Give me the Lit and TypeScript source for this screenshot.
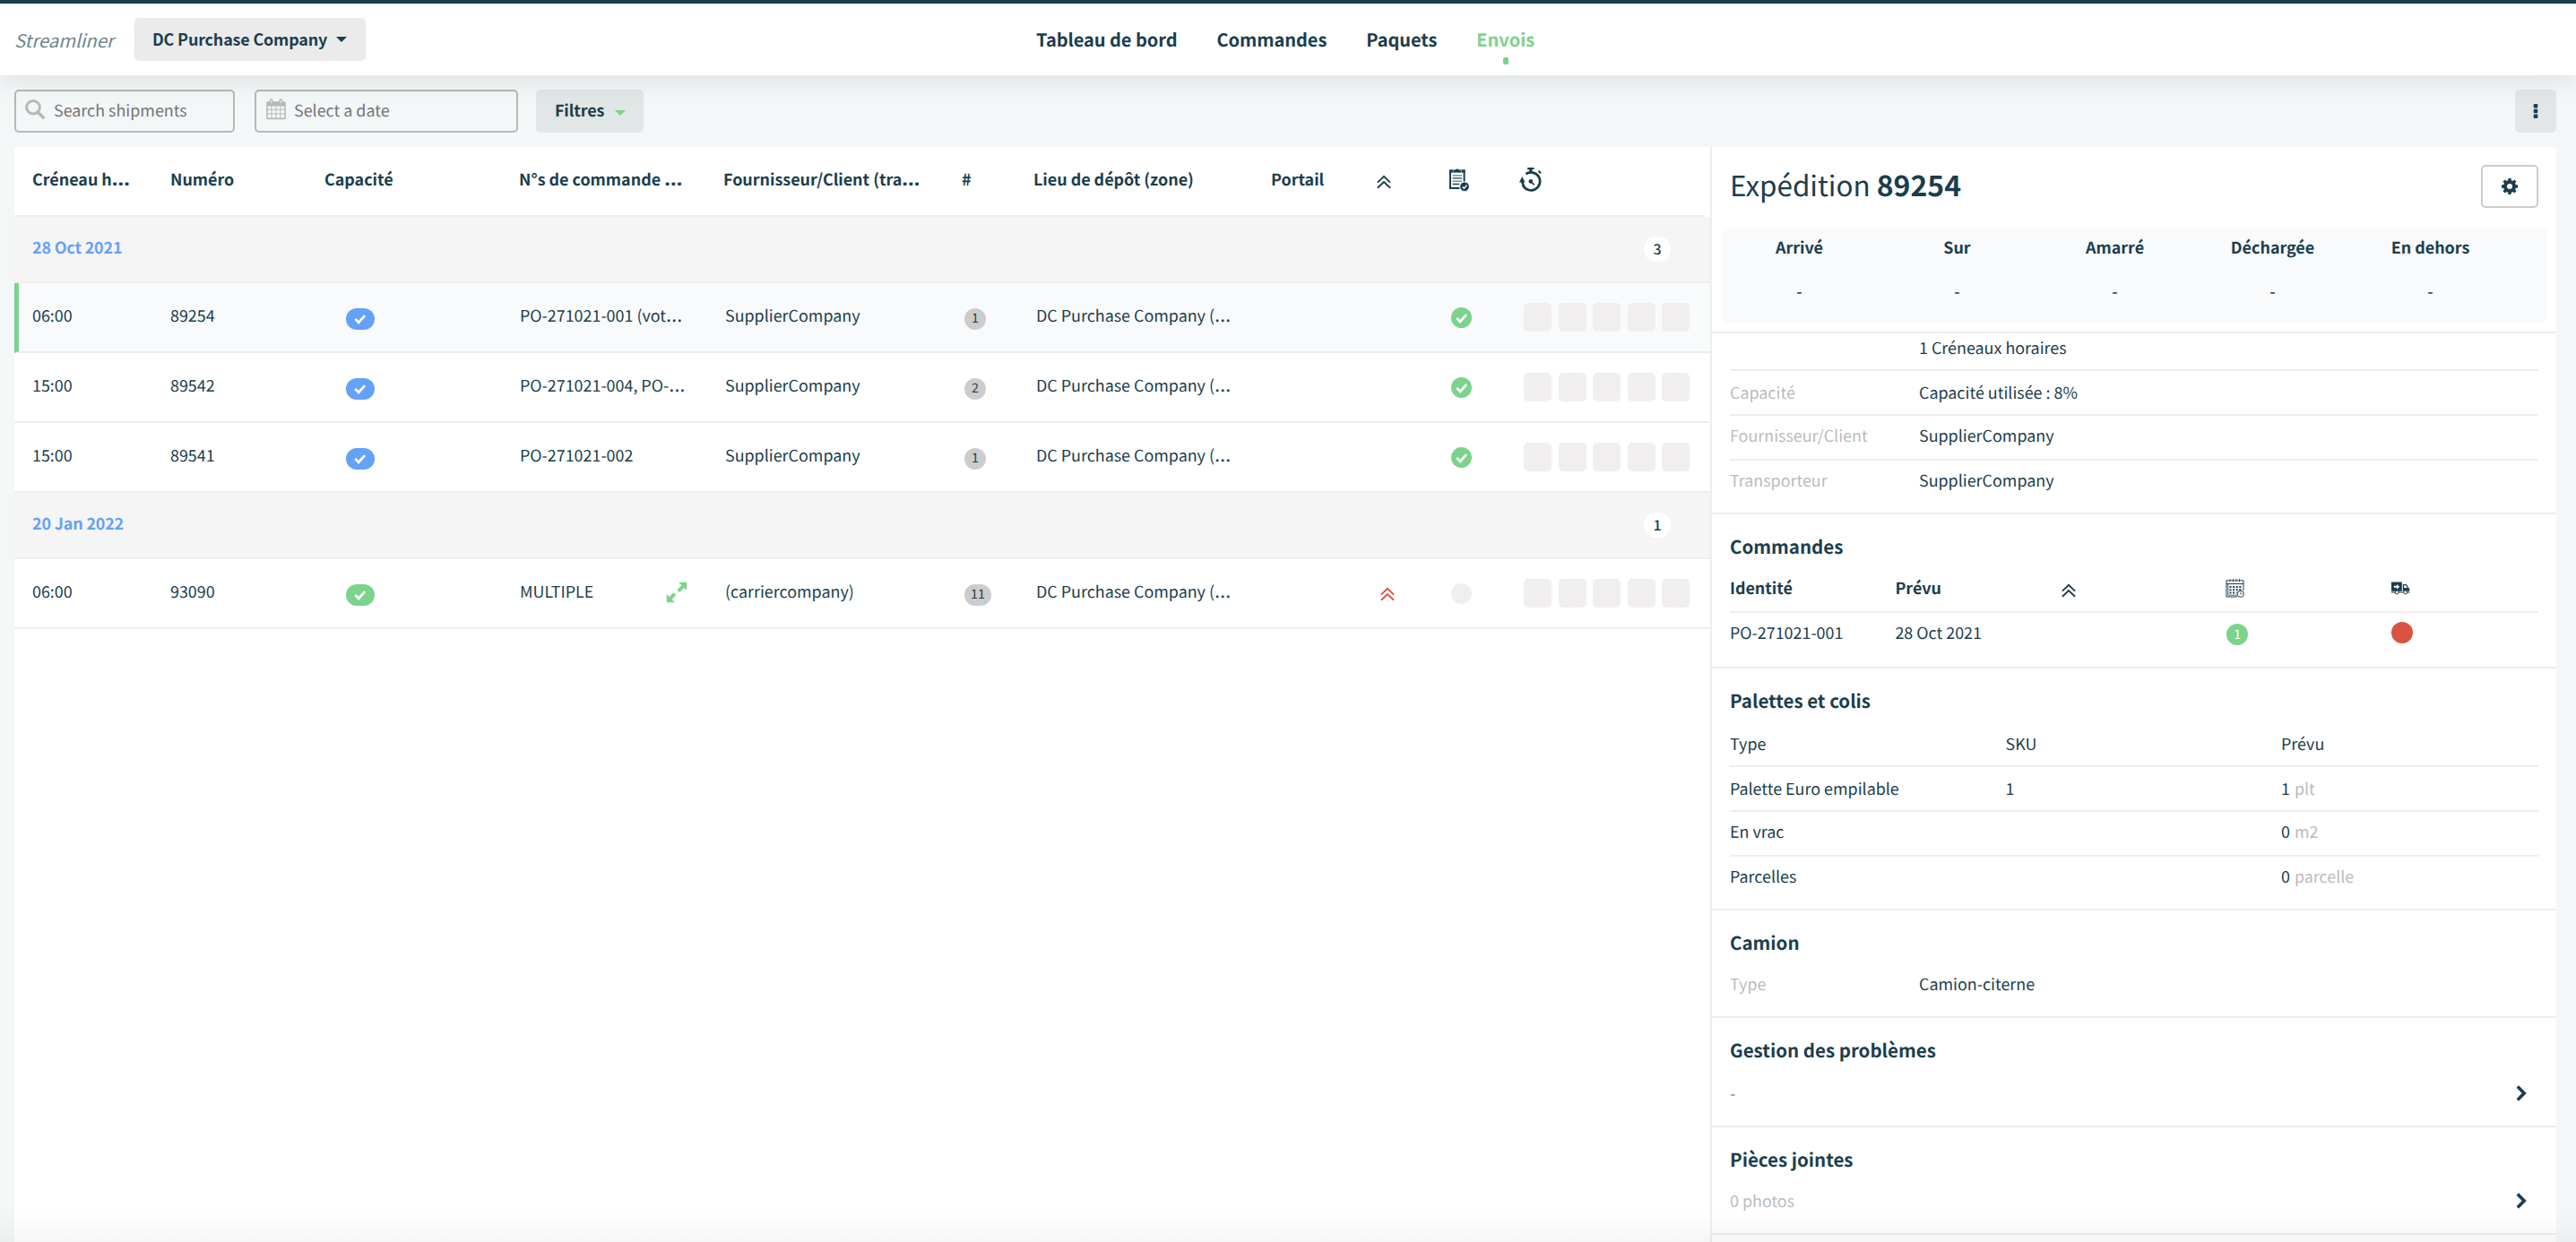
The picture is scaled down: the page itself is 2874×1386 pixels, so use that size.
import { LitElement, html, css, svg, nothing } from "lit";
import { customElement, property } from "lit/decorators.js";
import { classMap } from "lit/directives/class-map.js";

const chevrons = svg`<path d="M.9 8.6 8 1.8l7.100 6.800M.9 14.800 8 8l7.100 6.800" fill="none" stroke="currentColor" stroke-width="1.900"/>`;

const ICONS: Record<string, { w: number; h: number; body: unknown }> = {
  chevrons: { w: 16, h: 16, body: chevrons },
  search: {
    w: 22, h: 22,
    body: svg`<ellipse cx="9" cy="8.800" rx="7.400" ry="7.200" fill="none" stroke="currentColor" stroke-width="3"/><path d="m14 14 6.200 6" stroke="currentColor" stroke-width="3.600" stroke-linecap="round"/>`,
  },
  calendar: {
    w: 22, h: 24,
    body: svg`<path fill="currentColor" fill-rule="evenodd" d="M1.800 3.200h2V1.800a1.800 1.800 0 0 1 3.600 0v1.400h7.200V1.800a1.800 1.800 0 0 1 3.600 0v1.400h2A1.600 1.600 0 0 1 21.800 4.800v16.800a1.600 1.600 0 0 1-1.600 1.600H1.800A1.600 1.600 0 0 1 .2 21.600V4.800a1.600 1.600 0 0 1 1.600-1.600zM1.800 8.400v3.400h3.600V8.400zm4.600 0v3.400h4V8.400zm5 0v3.400h4V8.400zm5 0v3.400h3.800V8.400zM1.800 12.800v3.800h3.600v-3.800zm4.600 0v3.800h4v-3.800zm5 0v3.800h4v-3.800zm5 0v3.800h3.800v-3.800zM1.800 17.600v4h3.600v-4zm4.600 0v4h4v-4zm5 0v4h4v-4zm5 0v4h3.800v-4z"/><path d="M5.600 1.600v3.600M16.400 1.600v3.600" stroke="#f4f7f8" stroke-width="1"/>`,
  },
  clipboard: {
    w: 23, h: 27,
    body: svg`<path d="M1 3.400h15.600v12M11.500 23H1V3.400" fill="none" stroke="currentColor" stroke-width="2"/><path d="M0 2.500h17.600v3.200H0z" fill="currentColor"/><path d="M4.300 2.300h2.700a2 2 0 0 1 3.600 0h2.700v3.500H4.300z" fill="currentColor" stroke="#fff" stroke-width=".5"/><path d="M3.600 8.800h10.500M3.600 15.200h10.500" stroke="currentColor" stroke-width="1.200" opacity=".7"/><path d="M3.600 11.900h10.500M3.600 18.500h7.500" stroke="currentColor" stroke-width="1.400"/><circle cx="17" cy="21.300" r="5.200" fill="currentColor" stroke="#fff" stroke-width=".6"/><path d="m14.700 21.400 1.800 1.800 3-3.600" fill="none" stroke="#fff" stroke-width="1.400"/>`,
  },
  stopwatch: {
    w: 26, h: 27,
    body: svg`<path d="M7.300 7.200a10 10 0 1 1-3.300 12.200" fill="none" stroke="currentColor" stroke-width="2.800"/><path d="M9.200 0h7.200v2.200h-2.100V5h-3V2.200H9.200zM0 16.400 3.200 10l3.400 6.400zM1.800 16h3l1 3.600-2.200 1zM20.800 4.600l1.400-1.500 2.600 2.300-1.500 1.700z" fill="currentColor"/><circle cx="12.800" cy="15.400" r="2.300" fill="currentColor"/><path d="m12.800 15.400 4 4" stroke="currentColor" stroke-width="1.500"/>`,
  },
  check: { w: 14, h: 12, body: svg`<path d="m1.300 5.900 3.800 4 7-7.800" fill="none" stroke="currentColor" stroke-width="2.800"/>` },
  expand: {
    w: 24, h: 24,
    body: svg`<path d="M14 .8h9.200V10l-2.900-2.900-5.200 5-2.700-2.700 5-5.400zM10 23.200H.8V14l2.900 2.900 4.700-4.600 2.700 2.700-4.400 4.900z" fill="currentColor"/>`,
  },
  gear: {
    w: 18, h: 18,
    body: svg`<circle cx="9" cy="9" r="5" fill="none" stroke="currentColor" stroke-width="4"/><path d="M9 0v4M9 14v4M0 9h4M14 9h4M2.600 2.600l2.900 2.900M12.500 12.500l2.900 2.900M15.400 2.600l-2.900 2.900M5.500 12.500l-2.900 2.900" stroke="currentColor" stroke-width="3.400"/>`,
  },
  dots: { w: 6, h: 18, body: svg`<g fill="currentColor"><rect x=".7" y="1" width="4.600" height="4.400" rx="1"/><rect x=".7" y="6.800" width="4.600" height="4.400" rx="1"/><rect x=".7" y="12.600" width="4.600" height="4.400" rx="1"/></g>` },
  next: { w: 12, h: 18, body: svg`<path d="m1.800 1.600 7.400 7.400-7.400 7.400" fill="none" stroke="currentColor" stroke-width="3.600"/>` },
  schedule: {
    w: 21, h: 21,
    body: svg`<g fill="none" stroke="currentColor"><path d="M20 13V1.800H1V20h12" stroke-width="1"/><path d="M1 5.500h19" stroke-width="1"/><path d="M2.800 5.500v12.700h10" stroke-width=".8"/><path d="M5 0v3.400M8.500 0v3.400M12 0v3.400M15.500 0v3.400" stroke-width="1.700" stroke="#fff"/><path d="M5 .2v3M8.500 .2v3M12 .2v3M15.500 .2v3" stroke-width="1.200"/><path d="M4.500 9H18M4.500 12.300H18M4.500 15.500h8" stroke-width="2" stroke-dasharray="2 1.600"/><circle cx="16.800" cy="16.800" r="3.600" stroke-width="1" fill="#fff"/><path d="M16.800 14.800v2h1.700" stroke-width=".8"/></g>`,
  },
  truck: {
    w: 21, h: 15,
    body: svg`<path d="M0 .5h11.800v10.300H0zM12.800 3h4l2.600 4.200.8.600v3h-7.400zM0 11.600h20.500v1H0z" fill="currentColor"/><path d="M14.200 4.200h2l1.600 2.800h-3.600z" fill="#fff"/><path d="M2.800 4.800h3.200V2.900l3.200 2.900L6 8.700V6.800H2.800z" fill="#fff"/><circle cx="6.200" cy="12" r="1.900" fill="#fff" stroke="currentColor" stroke-width="1"/><circle cx="15.600" cy="12" r="1.900" fill="#fff" stroke="currentColor" stroke-width="1"/>`,
  },
};

const icon = (name: string) => {
  const i = ICONS[name];
  return html`<svg class="icon i-${name}" width=${i.w} height=${i.h} viewBox="0 0 ${i.w} ${i.h}">${i.body}</svg>`;
};

/* A cut-off label: the ellipsis sits on the baseline. */
const label = (text: string) =>
  text.endsWith("…") ? html`${text.slice(0, -1)}<span class="cut">…</span>` : text;

const base = css`
  * { box-sizing: border-box; }
  .icon { display: block; flex: none; }
  .cut { font-family: "Open Sans", sans-serif; font-size: 23.500px; line-height: 0; }
`;

interface Shipment {
  time: string; id: string; tone: string; orders: string; multiple?: boolean;
  party: string; count: number; place: string; priority?: boolean; checked: boolean;
}

const GROUPS: { date: string; items: Shipment[] }[] = [
  {
    date: "28 Oct 2021",
    items: [
      { time: "06:00", id: "89254", tone: "blue", orders: "PO-271021-001 (vot…", party: "SupplierCompany", count: 1, place: "DC Purchase Company (…", checked: true },
      { time: "15:00", id: "89542", tone: "blue", orders: "PO-271021-004, PO-…", party: "SupplierCompany", count: 2, place: "DC Purchase Company (…", checked: true },
      { time: "15:00", id: "89541", tone: "blue", orders: "PO-271021-002", party: "SupplierCompany", count: 1, place: "DC Purchase Company (…", checked: true },
    ],
  },
  {
    date: "20 Jan 2022",
    items: [
      { time: "06:00", id: "93090", tone: "green", orders: "MULTIPLE", multiple: true, party: "(carriercompany)", count: 11, place: "DC Purchase Company (…", priority: true, checked: false },
    ],
  },
];

@customElement("top-bar")
export class TopBar extends LitElement {
  static styles = [base, css`
    :host { display: block; position: relative; }
    .bar { height: 84px; border-top: 4px solid #1b3e4d; background: #fff; display: grid; grid-template-columns: 1fr auto 1fr; box-shadow: 0 4px 32px rgba(0, 0, 0, .1); }
    .left { display: flex; align-items: center; padding: 0 0 0 16px; height: 80px; }
    .brand { width: 134px; font-size: 20.300px; font-style: italic; color: #6f868f; line-height: 30px; padding-bottom: 1px; }
    .company { display: flex; align-items: center; height: 48px; width: 258px; padding: 0 0 0 20px; border: 0; border-radius: 5px; background: #ebebeb; font: inherit; font-weight: 700; color: inherit; letter-spacing: -.15px; }
    .company span { padding-bottom: 3px; }
    .caret { width: 0; height: 0; border: 6px solid transparent; border-top-color: currentColor; border-bottom: 0; margin-left: 10px; }
    nav { display: flex; gap: 44px; height: 80px; margin: 0 6px 0 0; font-size: 20px; font-weight: 700; letter-spacing: -.05px; }
    .item { display: flex; flex-direction: column; align-items: center; line-height: 30px; padding-top: 25px; }
    .item.on { color: #7bd38c; }
    .item.on::after { content: ""; width: 6px; height: 8px; border-radius: 2px; background: #7bd38c; margin-top: 5px; }
  `];
  render() {
    return html`<header class="bar">
      <div class="left">
        <div class="brand">Streamliner</div>
        <button class="company"><span>DC Purchase Company</span><i class="caret"></i></button>
      </div>
      <nav>
        ${["Tableau de bord", "Commandes", "Paquets", "Envois"].map(
          (t) => html`<a class=${classMap({ item: true, on: t === "Envois" })}>${t}</a>`
        )}
      </nav>
    </header>`;
  }
}

@customElement("filter-bar")
export class FilterBar extends LitElement {
  static styles = [base, css`
    :host { display: block; }
    .tools { display: flex; height: 80px; padding: 16px 22px 16px 16px; }
    .field { display: flex; align-items: center; height: 48px; border: 2px solid #b8b8b8; border-radius: 5px; color: #b8b8b8; padding-left: 10px; }
    .field span { color: #757575; padding: 0 0 3px 9px; }
    .search { width: 246px; margin-right: 22px; }
    .search span { padding-left: 10px; white-space: nowrap; }
    .field .icon { margin-top: -4px; }
    .date { width: 294px; margin-right: 20px; padding-left: 11px; }
    .filters { display: flex; align-items: center; gap: 12px; width: 120px; height: 48px; padding-left: 21px; background: #e1e6e6; border-radius: 5px; font-weight: 700; }
    .filters span { padding-bottom: 3px; letter-spacing: -.1px; }
    .caret { border: 6px solid transparent; border-top-color: #7bd38c; border-bottom: 0; margin-top: 3px; }
    .more { display: flex; align-items: center; justify-content: center; width: 46px; height: 48px; margin-left: auto; background: #e1e6e6; border-radius: 5px; }
  `];
  render() {
    return html`<div class="tools">
      <div class="field search">${icon("search")}<span>Search shipments</span></div>
      <div class="field date">${icon("calendar")}<span>Select a date</span></div>
      <div class="filters"><span>Filtres</span><i class="caret"></i></div>
      <div class="more">${icon("dots")}</div>
    </div>`;
  }
}

@customElement("shipment-table")
export class ShipmentTable extends LitElement {
  static styles = [base, css`
    :host { display: block; background: #fff; border-right: 2px solid #eee; border-top-left-radius: 5px; }
    .head, .row { display: grid; align-items: center; white-space: nowrap; border-bottom: 2px solid #eee; height: 78px; }
    .head { grid-template-columns: 154px 172px 217px 228px 266px 80px 265px 118px 81px 78px 1fr; padding-left: 20px; margin-right: 6px; font-weight: 700; }
    .head .i-chevrons { margin-top: 2px; }
    .head .i-clipboard, .head .i-stopwatch { margin-top: -4px; }
    .t { padding-bottom: 4px; }
    .group { display: flex; align-items: center; justify-content: space-between; height: 74px; padding: 0 44px 0 20px; background: #f5f5f5; border-bottom: 2px solid #eee; color: #64a1f8; font-weight: 700; }
    .group .t { letter-spacing: -.15px; }
    .total { width: 30px; height: 28px; border-radius: 14px; background: #fff; color: #1b3e4d; font-size: 16px; font-weight: 500; line-height: 26px; text-align: center; }
    .row { grid-template-columns: 154px 196px 194px 229px 267px 80px 384px 79px 81px 1fr; padding-left: 20px; }
    .row.on { background: #f9fafc; border-left: 5px solid #7bd38c; padding-left: 15px; }
    .pill { display: flex; align-items: center; justify-content: center; width: 32px; height: 24px; border-radius: 12px; color: #fff; margin-top: 4px; }
    .blue { background: #64a1f8; }
    .green { background: #7bd38c; }
    .orders { display: flex; align-items: center; justify-content: space-between; padding-right: 42px; }
    .orders .icon { color: #7bd38c; margin-top: -2px; }
    .count { justify-self: start; min-width: 24px; height: 24px; padding: 0 7px; border-radius: 12px; background: #ccc; font-size: 14.300px; line-height: 22px; text-align: center; margin-top: 4px; }
    .alert { color: #d95340; margin-top: 2px; }
    .state { display: flex; align-items: center; justify-content: center; width: 23px; height: 23px; border-radius: 50%; background: #f0eeef; color: #fff; margin-top: 1px; }
    .state.ok { background: #7bd38c; }
    .steps { display: flex; gap: 7.500px; }
    .step { width: 31px; height: 32px; border-radius: 5px; background: #f0eeef; }
  `];
  private row(s: Shipment, on: boolean) {
    return html`<div class=${classMap({ row: true, on })}>
      <div class="t">${s.time}</div>
      <div class="t">${s.id}</div>
      <div class="pill ${s.tone}">${icon("check")}</div>
      <div class="orders"><span class="t">${label(s.orders)}</span>${s.multiple ? icon("expand") : nothing}</div>
      <div class="t">${s.party}</div>
      <div class="count">${s.count}</div>
      <div class="t">${label(s.place)}</div>
      <div class="alert">${s.priority ? icon("chevrons") : nothing}</div>
      <div class=${classMap({ state: true, ok: s.checked })}>${s.checked ? icon("check") : nothing}</div>
      <div class="steps">${[1, 2, 3, 4, 5].map(() => html`<i class="step"></i>`)}</div>
    </div>`;
  }
  render() {
    const heads = ["Créneau h…", "Numéro", "Capacité", "N°s de commande …", "Fournisseur/Client (tra…", "#", "Lieu de dépôt (zone)", "Portail"];
    return html`
      <div class="head">${heads.map((h) => html`<div class="t">${label(h)}</div>`)}${["chevrons", "clipboard", "stopwatch"].map(icon)}</div>
      ${GROUPS.map((g) => html`
        <div class="group"><span class="t">${g.date}</span><span class="total">${g.items.length}</span></div>
        ${g.items.map((s) => this.row(s, s.id === "89254"))}`)}
    `;
  }
}

@customElement("info-section")
export class InfoSection extends LitElement {
  @property() heading = "";
  static styles = [base, css`
    :host { display: block; border-bottom: 2px solid #eee; padding: 0 20px; }
    .title { font-size: 20.500px; line-height: 28px; font-weight: 700; margin: 0; padding: 21px 0 11px; }
  `];
  render() {
    return html`${this.heading ? html`<h2 class="title">${this.heading}</h2>` : nothing}<slot></slot>`;
  }
}

@customElement("shipment-detail")
export class ShipmentDetail extends LitElement {
  static styles = [base, css`
    :host { display: block; background: #fff; border-top-right-radius: 5px; overflow: hidden; }
    .top { display: flex; align-items: flex-start; justify-content: space-between; height: 90px; padding: 20px 20px 0 20px; }
    .name { margin: 0; font-size: 31.400px; font-weight: 400; line-height: 44px; }
    .name b { font-weight: 700; font-size: 32px; }
    .settings { display: flex; align-items: center; justify-content: center; width: 64px; height: 48px; border: 2px solid #ccc; border-radius: 5px; }
    .status { display: grid; grid-template-columns: repeat(5, 176px); height: 106px; margin: 0 10px; background: #f9fafc; border-radius: 6px; text-align: center; }
    .status div { font-weight: 700; padding: 10px 1px 0 0; line-height: 24px; }
    .status p { margin: 25px 0 0; font-weight: 500; line-height: 24px; }
    .rule { height: 12px; border-bottom: 2px solid #eee; }
    .line { display: grid; height: 50px; padding-top: 12px; line-height: 24px; border-bottom: 2px solid #eee; }
    .line.up { padding-top: 10px; }
    .line.first { height: 42px; padding-top: 4px; }
    .line.last { border: 0; height: 58px; padding-top: 10px; }
    .line.tall { height: 60px; }
    .pair { grid-template-columns: 211px 1fr; }
    .muted, .pair > :first-child { color: #bbb; }
    .unit { color: #bbb; margin-left: 1px; }
    .five { grid-template-columns: repeat(5, 184.400px); }
    .three { grid-template-columns: repeat(3, 307.500px); }
    .strong { font-weight: 700; }
    .badge { width: 24px; height: 24px; border-radius: 50%; margin-left: 1px; color: #fff; text-align: center; font-size: 14.300px; line-height: 23px; }
    .green { background: #7bd38c; margin-top: 2px; }
    .red { background: #d95340; margin-left: 0; }
    .strong .i-chevrons { margin: 7px 0 0 1px; }
    .strong .i-schedule { margin: 2px 0 0 0; }
    .strong .i-truck { margin: 5px 0 0 0; }
    .nav { display: flex; justify-content: space-between; padding: 12px 13px 0 0; line-height: 24px; height: 60px; }
    .nav.up { height: 58px; padding-top: 10px; }
    .nav .icon { margin-top: 3px; }
    .soft { color: #6f868f; }
  `];
  render() {
    return html`
      <div class="top"><h1 class="name">Expédition <b>89254</b></h1><div class="settings">${icon("gear")}</div></div>
      <div class="status">${["Arrivé", "Sur", "Amarré", "Déchargée", "En dehors"].map((s) => html`<div>${s}<p>-</p></div>`)}</div>
      <div class="rule"></div>
      <info-section>
        <div class="line pair first"><span></span><span>1 Créneaux horaires</span></div>
        <div class="line pair"><span>Capacité</span><span>Capacité utilisée : 8%</span></div>
        <div class="line pair up"><span>Fournisseur/Client</span><span>SupplierCompany</span></div>
        <div class="line pair last"><span>Transporteur</span><span>SupplierCompany</span></div>
      </info-section>
      <info-section heading="Commandes">
        <div class="line five strong up"><span>Identité</span><span>Prévu</span><span>${icon("chevrons")}</span><span>${icon("schedule")}</span><span>${icon("truck")}</span></div>
        <div class="line five last tall"><span>PO-271021-001</span><span>28 Oct 2021</span><span></span><span class="badge green">1</span><span class="badge red"></span></div>
      </info-section>
      <info-section heading="Palettes et colis">
        <div class="line three"><span>Type</span><span>SKU</span><span>Prévu</span></div>
        <div class="line three"><span>Palette Euro empilable</span><span>1</span><span>1 <span class="unit">plt</span></span></div>
        <div class="line three up"><span>En vrac</span><span></span><span>0 <span class="unit">m2</span></span></div>
        <div class="line three last"><span>Parcelles</span><span></span><span>0 <span class="unit">parcelle</span></span></div>
      </info-section>
      <info-section heading="Camion">
        <div class="line pair last"><span>Type</span><span>Camion-citerne</span></div>
      </info-section>
      <info-section heading="Gestion des problèmes">
        <div class="nav"><span class="soft">-</span>${icon("next")}</div>
      </info-section>
      <info-section heading="Pièces jointes">
        <div class="nav up"><span class="muted">0 photos</span>${icon("next")}</div>
      </info-section>
    `;
  }
}

@customElement("app-root")
export class AppRoot extends LitElement {
  static styles = [base, css`
    :host { display: block; position: relative; height: 1386px; overflow: hidden; background: #f4f7f8; color: #1b3e4d; font: 400 17.900px/24px "Noto Sans CJK SC", "Noto Sans", sans-serif; text-rendering: geometricPrecision; }
    .page { display: grid; grid-template-rows: 84px 80px 1fr; height: 1386px; }
    .panels { display: grid; grid-template-columns: 1894px 942px; padding-left: 16px; min-height: 0; }
    .fade { position: absolute; left: 0; right: 0; bottom: 0; height: 36px; background: linear-gradient(rgba(0, 0, 0, 0), rgba(0, 0, 0, .035)); pointer-events: none; }
  `];
  render() {
    return html`<div class="page">
        <top-bar></top-bar>
        <filter-bar></filter-bar>
        <main class="panels"><shipment-table></shipment-table><shipment-detail></shipment-detail></main>
      </div>
      <div class="fade"></div>`;
  }
}
